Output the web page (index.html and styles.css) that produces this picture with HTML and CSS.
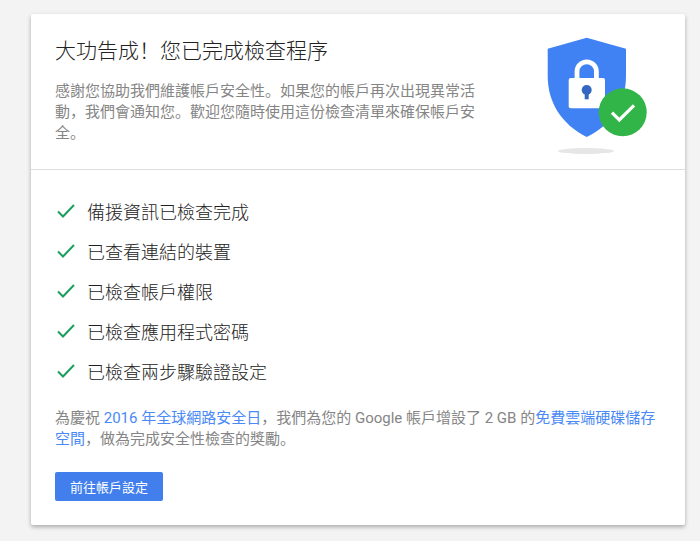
FILE: index.html
```
<!DOCTYPE html>
<html lang="zh-CN">
<head>
  <meta charset="utf-8">
  <title>安全性檢查</title>
  <meta name="viewport" content="width=device-width, initial-scale=1.0">
  <link rel="stylesheet" href="styles.css">
</head>
<body>
  <main class="card">
    <header class="card-header">
      <div class="intro">
        <h1>大功告成！您已完成檢查程序</h1>
        <p>感謝您協助我們維護帳戶安全性。如果您的帳戶再次出現異常活動，我們會通知您。歡迎您隨時使用這份檢查清單來確保帳戶安全。</p>
      </div>
      <svg class="shield" width="100" height="118" viewBox="0 0 100 118" aria-hidden="true">
        <ellipse cx="39" cy="114" rx="28" ry="3" fill="#e6e6e6"/>
        <path d="M39.7 .7 79 11.7V39c0 26-13 48-39.3 61C14 87 .7 65 .7 39V11.7z" fill="#4082f4"/>
        <path d="M30 43V34.5a9.7 9.7 0 0 1 19.4 0V43" fill="none" stroke="#fff" stroke-width="4.8"/>
        <rect x="21.7" y="41" width="36.3" height="30.3" rx="2" fill="#fff"/>
        <circle cx="39.7" cy="53" r="5" fill="#3467c0"/>
        <path d="M37.7 55h4v7.3h-4z" fill="#3467c0"/>
        <circle cx="75.7" cy="75.3" r="24" fill="#32b548"/>
        <path d="M65 75.7l7.3 7.3L87 68.3" fill="none" stroke="#fff" stroke-width="3.2"/>
      </svg>
    </header>

    <section class="card-body">
      <ul class="checklist">
        <li><svg class="tick" width="18" height="14" viewBox="0 0 18 14" aria-hidden="true"><path d="M1 7.5l5 5L17 1"/></svg>備援資訊已檢查完成</li>
        <li><svg class="tick" width="18" height="14" viewBox="0 0 18 14" aria-hidden="true"><path d="M1 7.5l5 5L17 1"/></svg>已查看連結的裝置</li>
        <li><svg class="tick" width="18" height="14" viewBox="0 0 18 14" aria-hidden="true"><path d="M1 7.5l5 5L17 1"/></svg>已檢查帳戶權限</li>
        <li><svg class="tick" width="18" height="14" viewBox="0 0 18 14" aria-hidden="true"><path d="M1 7.5l5 5L17 1"/></svg>已檢查應用程式密碼</li>
        <li><svg class="tick" width="18" height="14" viewBox="0 0 18 14" aria-hidden="true"><path d="M1 7.5l5 5L17 1"/></svg>已檢查兩步驟驗證設定</li>
      </ul>
      <p>為慶祝 <a href="#">2016 年全球網路安全日</a>，我們為您的 Google 帳戶增設了 2 GB 的<a href="#">免費雲端硬碟儲存空間</a>，做為完成安全性檢查的獎勵。</p>
      <button type="button" class="settings-button">前往帳戶設定</button>
    </section>
  </main>
</body>
</html>
```

FILE: styles.css
```
* {
  box-sizing: border-box;
}

body {
  margin: 0;
  padding: 14px 15px 16px 31px;
  background-color: #f3f3f3;
  color: #222;
  font-family: Roboto, "Noto Sans CJK SC", sans-serif;
}

.card {
  background-color: #fff;
  border-radius: 2px;
  box-shadow: 0 2px 4px rgba(0, 0, 0, 0.3);
}

.card-header {
  display: flex;
  justify-content: space-between;
  padding: 23px 38px 14px 24px;
  border-bottom: 1px solid #dedede;
}

.intro {
  max-width: 424px;
}

h1 {
  margin: 0 0 16px;
  font-size: 21px;
  font-weight: 300;
  line-height: 28px;
}

p {
  margin: 0;
  color: #858585;
  font-size: 15px;
  line-height: 21px;
}

.shield {
  flex-shrink: 0;
}

.card-body {
  padding: 21px 24px 24px;
}

.checklist {
  margin: 0 0 17px;
  padding: 0;
  list-style: none;
}

.checklist li {
  display: flex;
  align-items: center;
  gap: 12px;
  height: 40px;
  padding-left: 2px;
  font-size: 18px;
  font-weight: 300;
}

.tick path {
  fill: none;
  stroke: #1a9f5c;
  stroke-width: 2;
}

a {
  color: #4a8af5;
  text-decoration: none;
}

.settings-button {
  display: block;
  height: 29px;
  margin-top: 22px;
  padding: 0 15px;
  border: none;
  border-radius: 2px;
  background-color: #427fed;
  color: #fff;
  font-family: inherit;
  font-size: 13px;
  cursor: pointer;
}
```
